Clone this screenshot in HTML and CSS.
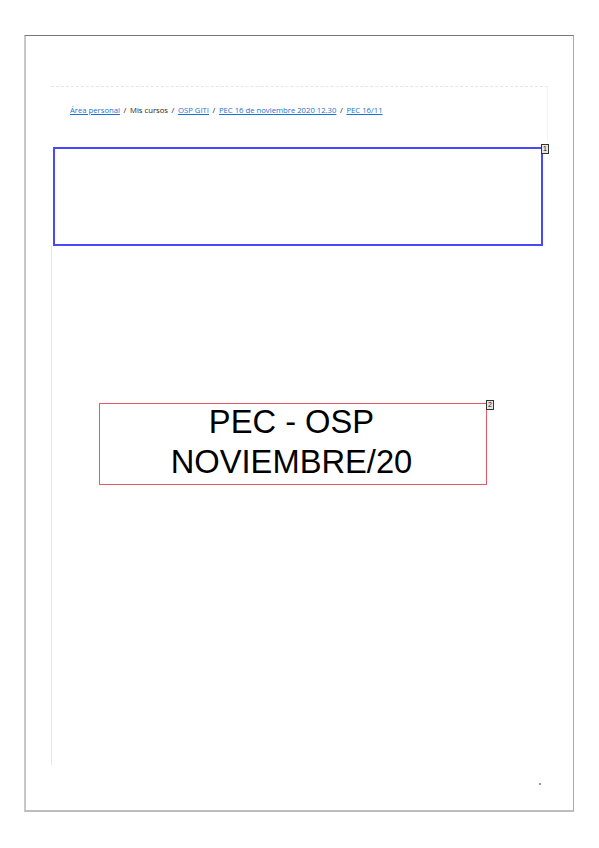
FILE: index.html
```html
<!DOCTYPE html>
<html lang="es">
<head>
<meta charset="utf-8">
<title>PEC 16/11</title>
<link rel="stylesheet" href="styles.css">
</head>
<body>
<div class="page">
  <div class="content">
    <div class="crumbs">
      <nav class="crumb-line">
        <a href="#">Área personal</a><span class="sep">/</span><span class="plain">Mis cursos</span><span class="sep">/</span><a href="#">OSP GITI</a><span class="sep">/</span><a href="#">PEC 16 de noviembre 2020 12.30</a><span class="sep">/</span><a href="#">PEC 16/11</a>
      </nav>
    </div>
    <div class="blue-box">
      <span class="badge">1</span>
    </div>
    <div class="main">
      <div class="red-box">
        <span class="badge badge-2">2</span>
        <div class="title">PEC - OSP<br>NOVIEMBRE/20</div>
      </div>
    </div>
  </div>
  <div class="foot"><span class="dot"></span></div>
</div>
</body>
</html>
```
FILE: styles.css
```css
* { box-sizing: border-box; }
html, body { margin: 0; padding: 0; background: #fff; }
body { font-family: "Liberation Sans", Arial, sans-serif; }

.page {
  margin: 35px 0 0 24px;
  width: 550px;
  height: 777px;
  border-top: 1px solid #777;
  border-left: 2px solid #c8c8c8;
  border-right: 1.5px solid #aaa;
  border-bottom: 2px solid #bdbdbd;
  padding: 50px 0 0 25px;
  display: flex;
  flex-direction: column;
}

.content {
  width: 497px;
  display: flex;
  flex-direction: column;
}

.crumbs {
  height: 54px;
  border-top: 1px dashed #e6e6e6;
  border-right: 1px solid #f2f2f2;
  display: flex;
  align-items: center;
  padding: 0 0 8px 19px;
}

.crumb-line {
  font-family: "Open Sans", "Liberation Sans", sans-serif;
  font-size: 7.7px;
  color: #222;
  white-space: nowrap;
}
.crumb-line a { color: #1a73d4; text-decoration: underline; }
.crumb-line .sep { margin: 0 3.6px; }

.blue-box {
  position: relative;
  margin: 7px 0 0 2px;
  width: 490px;
  height: 99px;
  border: 2px solid #4848ff;
}

.badge {
  position: absolute;
  top: -5px;
  right: -8px;
  width: 8px;
  height: 10px;
  border: 1.5px solid #333;
  background: #e6e6e6;
  color: #111;
  font-size: 7px;
  line-height: 7px;
  text-align: center;
  font-family: "Liberation Sans", sans-serif;
}
.badge-2 { top: -4px; right: -8px; }

.main {
  height: 519px;
  border-left: 1.5px solid #e6e6e6;
  padding: 157px 0 0 47px;
}

.red-box {
  position: relative;
  width: 388px;
  height: 82px;
  border: 1.5px solid #e5586a;
}

.title {
  font-family: "Liberation Sans", Arial, sans-serif;
  font-size: 32.7px;
  line-height: 40px;
  text-align: center;
  color: #000;
  margin-top: -2px;
  padding-right: 3px;
}

.foot {
  flex: 1;
  display: flex;
  justify-content: flex-end;
  padding: 18px 32px 0 0;
}
.dot { width: 2px; height: 2px; background: #999; }
```
